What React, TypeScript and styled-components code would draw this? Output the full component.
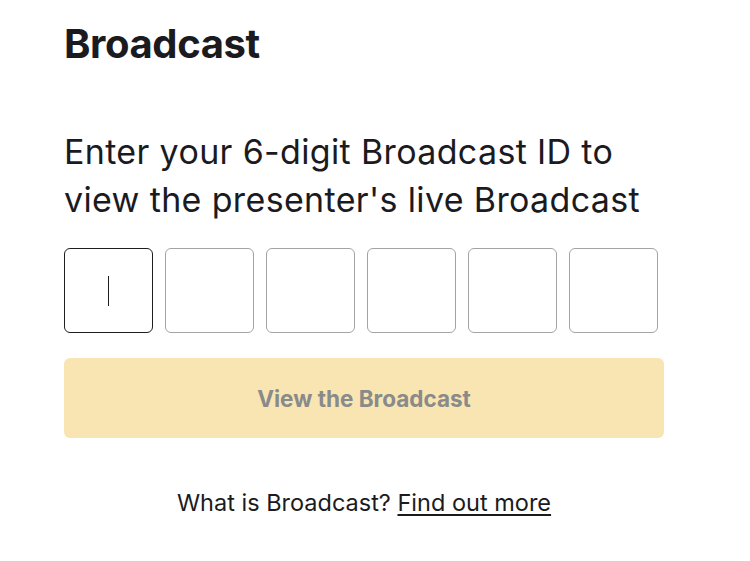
import React from "react";
import styled, { createGlobalStyle } from "styled-components";

const Global = createGlobalStyle`
  html, body { margin: 0; padding: 0; background: #ffffff; }
  body { font-family: "Inter", "Liberation Sans", sans-serif; color: #1b1b1f; }
`;

const Page = styled.main`
  width: 600px;
  padding: 22px 0 0 64px;
  display: flex;
  flex-direction: column;
`;

const Title = styled.h1`
  margin: 0;
  font-size: 40px;
  line-height: 44px;
  font-weight: 700;
  letter-spacing: -0.4px;
  color: #1b1b1f;
`;

const Prompt = styled.p`
  margin: 62px 0 0;
  font-size: 34px;
  line-height: 48px;
  font-weight: 400;
  letter-spacing: 0.35px;
  color: #1b1b1f;
`;

const Digits = styled.div`
  display: flex;
  gap: 12px;
  margin-top: 24px;
`;

const DigitBox = styled.div<{ $active?: boolean }>`
  width: 89px;
  height: 85px;
  box-sizing: border-box;
  border: 1px solid ${(p) => (p.$active ? "#1e1e1e" : "#a3a3a3")};
  border-radius: 6px;
  display: flex;
  align-items: center;
  justify-content: center;
`;

const Caret = styled.span`
  width: 1.5px;
  height: 30px;
  background: #1e1e1e;
`;

const ViewButton = styled.button`
  margin-top: 25px;
  width: 600px;
  height: 80px;
  border: none;
  border-radius: 6px;
  background: #f8e5b2;
  color: #8a8a8a;
  font-family: inherit;
  font-size: 22.5px;
  font-weight: 700;
`;

const Footer = styled.p`
  margin: 50px 0 0;
  width: 600px;
  text-align: center;
  font-size: 23.5px;
  line-height: 30px;
  color: #1b1b1f;
`;

const Link = styled.a`
  color: #1b1b1f;
  text-decoration: underline;
  text-underline-offset: 3px;
`;

export default function App() {
  return (
    <>
      <Global />
      <Page>
        <Title>Broadcast</Title>
        <Prompt>
          Enter your 6-digit Broadcast ID to
          <br />
          view the presenter's live Broadcast
        </Prompt>
        <Digits>
          <DigitBox $active>
            <Caret />
          </DigitBox>
          <DigitBox />
          <DigitBox />
          <DigitBox />
          <DigitBox />
          <DigitBox />
        </Digits>
        <ViewButton>View the Broadcast</ViewButton>
        <Footer>
          What is Broadcast? <Link>Find out more</Link>
        </Footer>
      </Page>
    </>
  );
}
